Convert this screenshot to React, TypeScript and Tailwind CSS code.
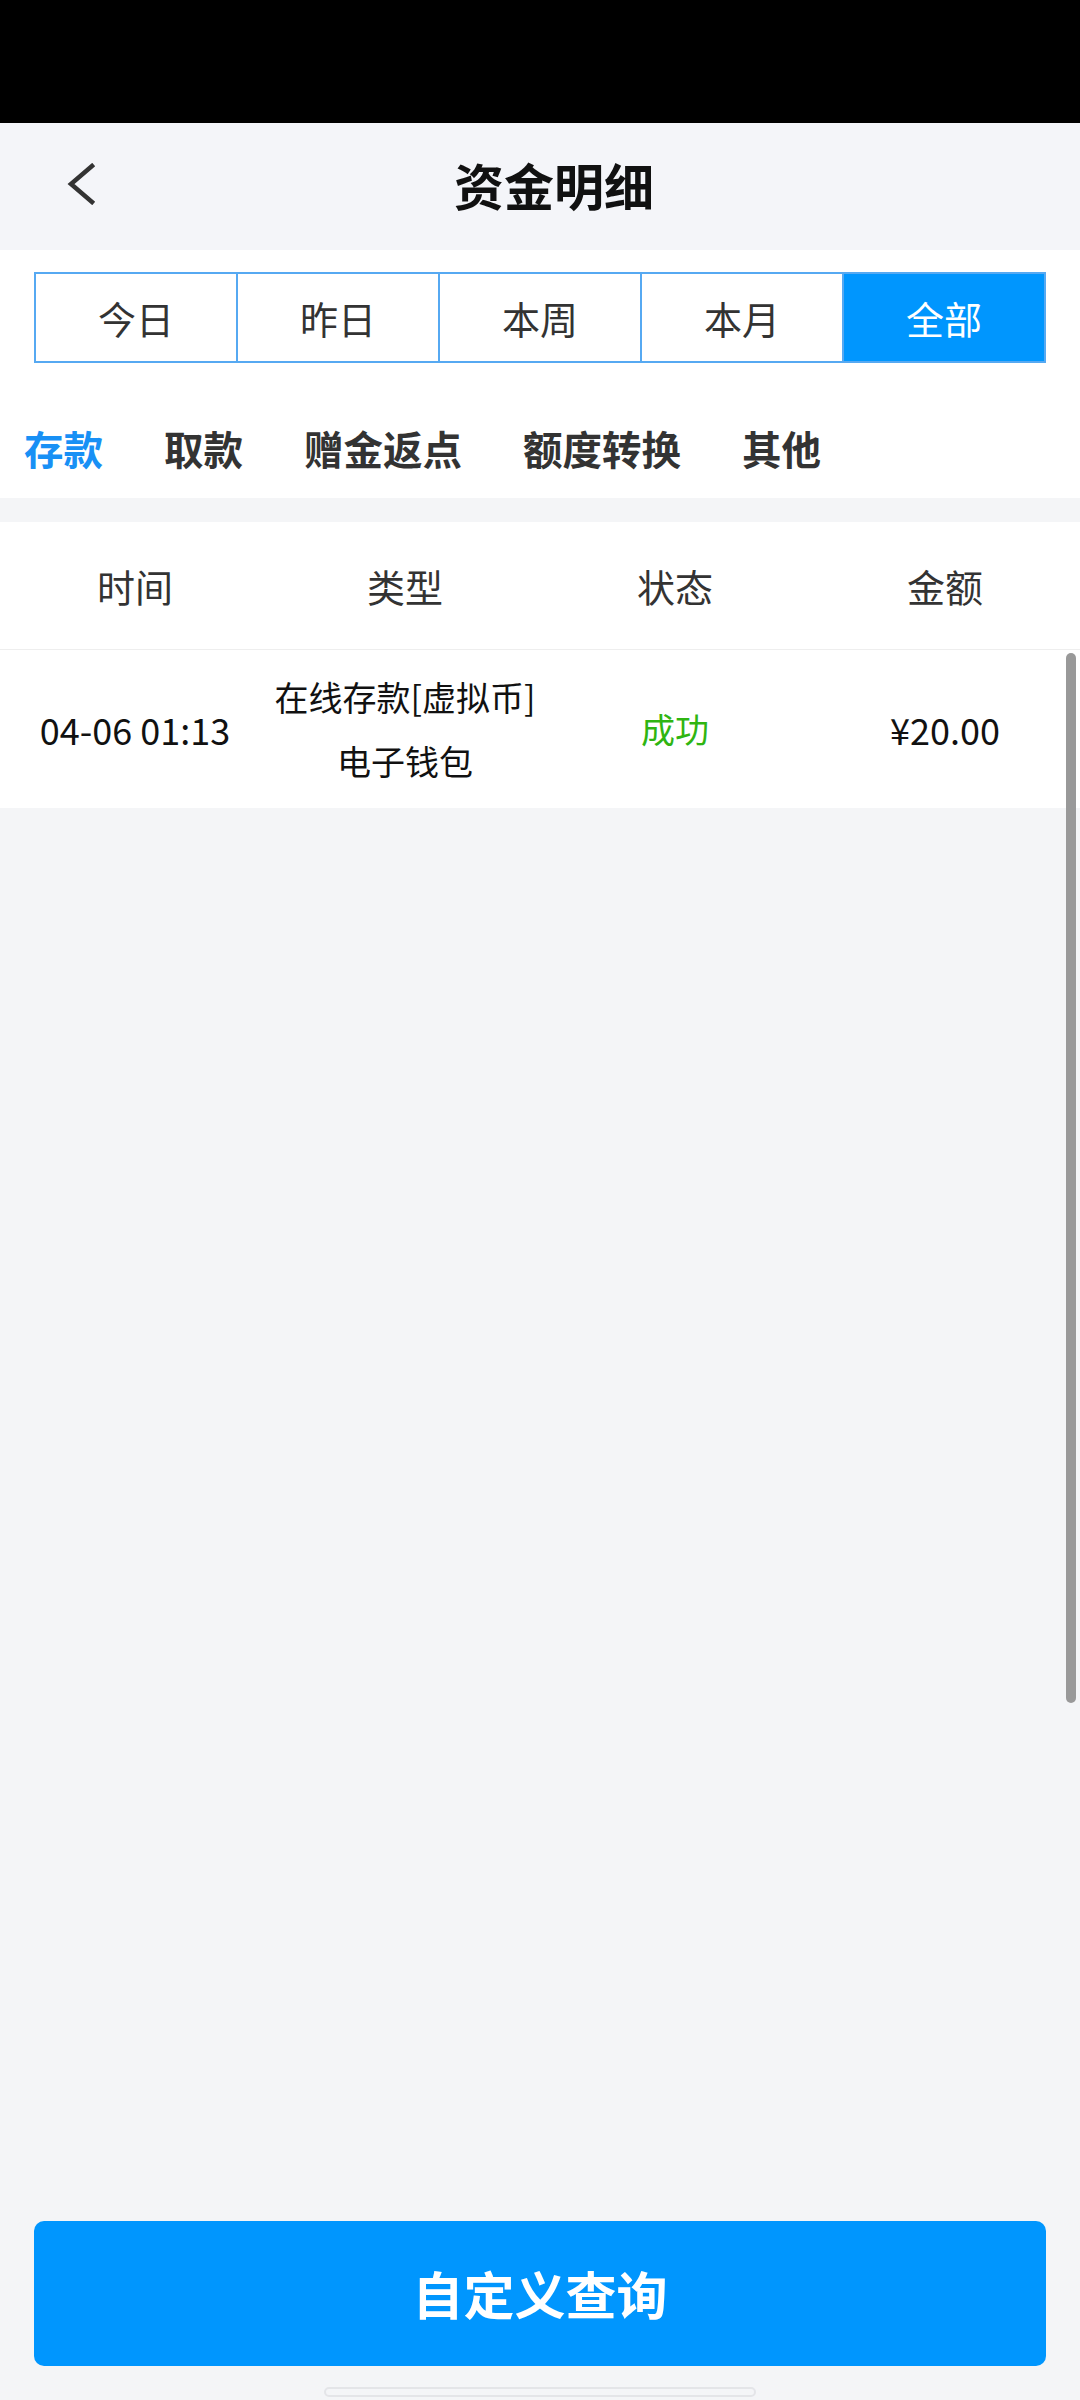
import React from "react";

const font = { fontFamily: '"Noto Sans CJK SC", "Noto Sans", sans-serif' };

export default function App() {
  const ranges = ["今日", "昨日", "本周", "本月", "全部"];
  const tabs = ["存款", "取款", "赠金返点", "额度转换", "其他"];
  const cols = ["时间", "类型", "状态", "金额"];
  return (
    <div
      className="relative flex h-[2400px] w-[1080px] flex-col overflow-hidden bg-[#f4f5f7]"
      style={font}
    >
      <div className="h-[123px] shrink-0 bg-black" />
      <div className="grid h-[127px] shrink-0 grid-cols-[1fr_auto_1fr] items-center bg-[#f4f5f9]">
        <div className="pb-[6px] pl-[66px]">
          <svg width="30" height="42" viewBox="0 0 30 42" fill="none" className="block">
            <path d="M26 3 L5 21 L26 39" stroke="#333" strokeWidth="4.5" strokeLinecap="square" />
          </svg>
        </div>
        <div className="pb-[6px] pl-[28px] text-[50px] font-bold leading-none text-[#111]">资金明细</div>
        <div />
      </div>
      <div className="shrink-0 bg-white">
        <div className="px-[34px] pt-[22px]">
          <div className="flex h-[91px] border-2 border-[#56a9f2]">
            {ranges.map((r, i) => (
              <div
                key={r}
                className={
                  "flex flex-1 items-center justify-center text-[38px] leading-none " +
                  (i > 0 ? "border-l-2 border-[#56a9f2] " : "") +
                  (i === 4 ? "bg-[#0096fe] text-white" : "text-[#333]")
                }
              >
                {r}
              </div>
            ))}
          </div>
        </div>
        <div className="flex gap-[61px] pb-[26px] pl-[24px] pt-[61px]">
          {tabs.map((t, i) => (
            <div
              key={t}
              className={
                "text-[39.5px] font-bold leading-[48px] " +
                (i === 0 ? "text-[#1890f5]" : "text-[#333]")
              }
            >
              {t}
            </div>
          ))}
        </div>
      </div>
      <div className="h-[24px] shrink-0" />
      <div className="grid h-[128px] shrink-0 grid-cols-4 items-center border-b border-[#eeeeee] bg-white">
        {cols.map((c) => (
          <div key={c} className="text-center text-[38px] leading-none text-[#333]">
            {c}
          </div>
        ))}
      </div>
      <div className="grid h-[158px] shrink-0 grid-cols-4 items-center bg-white text-[34px] text-[#111]">
        <div className="text-center text-[36px] leading-none">04-06 01:13</div>
        <div className="text-center leading-[64px]">
          <div>在线存款[虚拟币]</div>
          <div>电子钱包</div>
        </div>
        <div className="text-center leading-none text-[#2fb512]">成功</div>
        <div className="text-center text-[36px] leading-none">¥20.00</div>
      </div>
      <div className="flex-1" />
      <div className="mx-[34px] flex h-[145px] shrink-0 items-center justify-center rounded-[10px] bg-[#0096fe] text-[51px] font-bold text-white">
        自定义查询
      </div>
      <div className="flex shrink-0 justify-center pb-[3px] pt-[21px]">
        <div className="h-[10px] w-[432px] rounded-full border-2 border-[#e4e5e8] bg-[#f4f5f7]" />
      </div>
      <div className="absolute left-[1066px] top-[653px] h-[1050px] w-[10px] rounded-full bg-[#999999]" />
    </div>
  );
}
